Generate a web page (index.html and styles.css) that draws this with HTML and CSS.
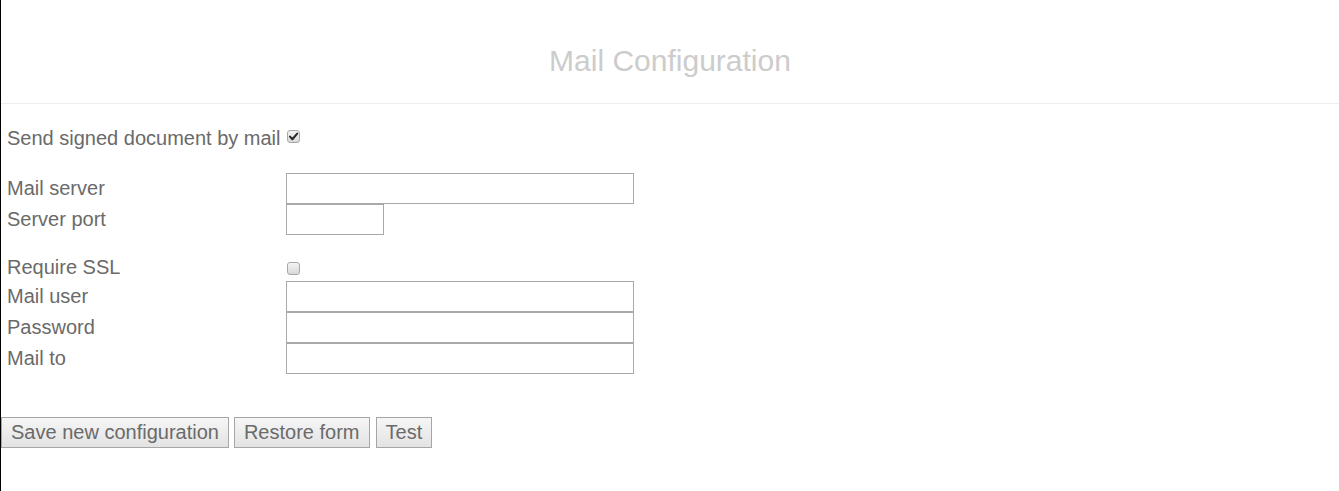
FILE: index.html
```html
<!DOCTYPE html>
<html lang="en">
<head>
<meta charset="utf-8">
<title>Mail Configuration</title>
<link rel="stylesheet" href="styles.css">
</head>
<body>
<div class="page">
  <header class="header">
    <h1 class="title">Mail Configuration</h1>
  </header>
  <main class="content">
    <div class="send-row">
      <span class="label-text">Send signed document by mail</span>
      <span class="cb cb-send" role="checkbox" aria-checked="true">
        <svg viewBox="0 0 13 13" width="13" height="13"><path d="M3 6.6 L5.4 9.2 L10.2 3.6" fill="none" stroke="#2b2b2b" stroke-width="2.1" stroke-linecap="round" stroke-linejoin="round"/></svg>
      </span>
    </div>

    <div class="grid group-1">
      <label class="lbl">Mail server</label>
      <div class="field"><input class="txt txt-wide" type="text"></div>
      <label class="lbl">Server port</label>
      <div class="field"><input class="txt txt-port" type="text"></div>
    </div>

    <div class="grid ssl-row">
      <label class="lbl">Require SSL</label>
      <div class="field"><span class="cb cb-ssl" role="checkbox" aria-checked="false"></span></div>
    </div>

    <div class="grid group-2">
      <label class="lbl">Mail user</label>
      <div class="field"><input class="txt txt-wide" type="text"></div>
      <label class="lbl">Password</label>
      <div class="field"><input class="txt txt-wide" type="password"></div>
      <label class="lbl">Mail to</label>
      <div class="field"><input class="txt txt-wide" type="text"></div>
    </div>
  </main>
  <div class="actions">
    <button class="btn" type="button">Save new configuration</button>
    <button class="btn" type="button">Restore form</button>
    <button class="btn btn-test" type="button">Test</button>
  </div>
</div>
</body>
</html>
```

FILE: styles.css
```css
html, body {
  margin: 0;
  padding: 0;
  background: #fff;
}

body {
  font-family: "Liberation Sans", Arial, sans-serif;
  color: #6a6a6a;
}

.page {
  min-height: 100vh;
  border-left: 1px solid #000;
  box-sizing: border-box;
}

.header {
  height: 104px;
  box-sizing: border-box;
  padding-top: 44px;
  border-bottom: 1px solid #eeeeee;
}

.title {
  margin: 0;
  font-size: 30px;
  line-height: 34px;
  font-weight: normal;
  text-align: center;
  color: #cccccc;
}

.content {
  padding-left: 6px;
}

.send-row {
  display: flex;
  align-items: flex-start;
  margin-top: 20px;
  height: 28px;
  font-size: 20px;
  line-height: 28px;
}

.cb {
  display: inline-flex;
  width: 13px;
  height: 13px;
  box-sizing: border-box;
  border: 1px solid #a8a8a8;
  border-radius: 3px;
  background: linear-gradient(#f4f4f4, #d9d9d9);
}

.cb svg {
  margin: -1px;
}

.cb-send {
  margin-left: 6px;
  margin-top: 6px;
}

.grid {
  display: grid;
  grid-template-columns: 279px auto;
  font-size: 20px;
}

.group-1 {
  margin-top: 21px;
  grid-auto-rows: 31px;
}

.ssl-row {
  margin-top: 20px;
  height: 24px;
  margin-bottom: 2px;
}

.group-2 {
  grid-auto-rows: 31px;
}

.lbl {
  display: flex;
  align-items: center;
  line-height: 24px;
  padding-bottom: 1px;
  color: #6a6a6a;
}

.field {
  display: flex;
  align-items: center;
}

.cb-ssl {
  margin-left: 1px;
  margin-top: 1px;
}

.txt {
  height: 31px;
  box-sizing: border-box;
  border: 1px solid #a9a9a9;
  margin: 0;
  padding: 2px 4px;
  font: 18px "Liberation Sans", Arial, sans-serif;
  background: #fff;
}

.txt-wide {
  width: 348px;
}

.txt-port {
  width: 98px;
}

.actions {
  display: flex;
  gap: 5px;
  margin-top: 43px;
}

.btn {
  height: 31px;
  box-sizing: border-box;
  margin: 0;
  padding: 0 9px;
  border: 1px solid #a6a6a6;
  border-radius: 0;
  background: linear-gradient(#f6f6f6, #e3e3e3);
  font: 20px "Liberation Sans", Arial, sans-serif;
  color: #6a6a6a;
  line-height: 29px;
}

.btn-test {
  margin-left: 1px;
}
```
